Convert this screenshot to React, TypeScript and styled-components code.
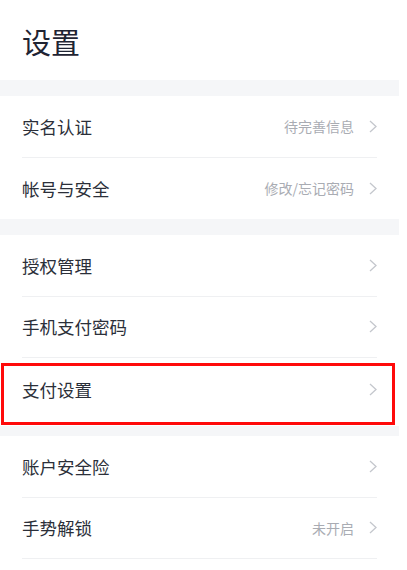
import React from "react";
import styled, { createGlobalStyle } from "styled-components";

type Item = { label: string; value?: string; highlight?: boolean };

const sections: Item[][] = [
    [
        { label: "实名认证", value: "待完善信息" },
        { label: "帐号与安全", value: "修改/忘记密码" },
    ],
    [
        { label: "授权管理" },
        { label: "手机支付密码" },
        { label: "支付设置", highlight: true },
    ],
    [
        { label: "账户安全险" },
        { label: "手势解锁", value: "未开启" },
    ],
];

function Chevron() {
    return (
        <svg width="8" height="13" viewBox="0 0 8 13" fill="none">
            <polyline points="1,1 7,6.5 1,12" stroke="#c4c7cd" strokeWidth="1.3" />
        </svg>
    );
}

export default function App() {
    return (
        <>
            <GlobalStyle />
            <Page>
                <Header>设置</Header>
                {sections.map((rows, s) => (
                    <React.Fragment key={s}>
                        <Band $small={s === 2} />
                        <Section $open={s === sections.length - 1}>
                            {rows.map((row) => (
                                <Row key={row.label} $tall={!!row.highlight}>
                                    <Label>{row.label}</Label>
                                    <Right>
                                        {row.value && <Value>{row.value}</Value>}
                                        <Chevron />
                                    </Right>
                                    {row.highlight && <Marker />}
                                </Row>
                            ))}
                        </Section>
                    </React.Fragment>
                ))}
            </Page>
        </>
    );
}

const GlobalStyle = createGlobalStyle`
    html, body {
        margin: 0;
        padding: 0;
        background: #ffffff;
    }
    body {
        font-family: "Noto Sans CJK SC", "Noto Sans", sans-serif;
    }
`;

const Page = styled.div`
    width: 399px;
    background: #ffffff;
`;

const Header = styled.h1`
    margin: 0;
    height: 80px;
    box-sizing: border-box;
    display: flex;
    align-items: center;
    padding: 2px 0 0 22px;
    font-size: 29px;
    font-weight: 400;
    color: #1f2433;
`;

const Band = styled.div<{ $small?: boolean }>`
    height: ${({ $small }) => ($small ? "10px" : "16px")};
    background: #f5f6f8;
`;

const Section = styled.div<{ $open?: boolean }>`
    display: flex;
    flex-direction: column;
    padding: 0 22px;
    background: #ffffff;

    & > div:last-child {
        border-bottom: ${({ $open }) => ($open ? "1px solid #eff0f2" : "none")};
    }
`;

const Row = styled.div<{ $tall?: boolean }>`
    position: relative;
    display: flex;
    align-items: center;
    justify-content: space-between;
    height: ${({ $tall }) => ($tall ? "68px" : "61.5px")};
    padding-bottom: ${({ $tall }) => ($tall ? "6px" : "0")};
    box-sizing: border-box;
    border-bottom: 1px solid #eff0f2;
`;

const Label = styled.span`
    font-size: 17.5px;
    color: #2b2f39;
`;

const Right = styled.div`
    display: flex;
    align-items: center;
    gap: 15px;
`;

const Value = styled.span`
    font-size: 14px;
    color: #a9acb3;
`;

const Marker = styled.div`
    position: absolute;
    top: 4.5px;
    left: -21px;
    width: 394px;
    height: 62px;
    box-sizing: border-box;
    border: 3px solid #ff0a0a;
    pointer-events: none;
`;
